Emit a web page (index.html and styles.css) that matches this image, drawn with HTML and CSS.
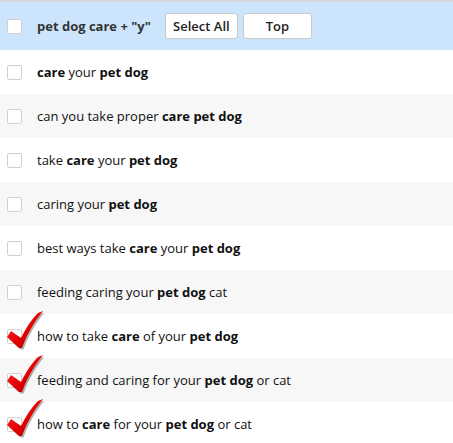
FILE: index.html
```html
<!DOCTYPE html>
<html>
<head>
<meta charset="utf-8">
<link rel="stylesheet" href="styles.css">
</head>
<body>
<div class="list">
  <div class="header">
    <span class="box"></span>
    <span class="title">pet dog care + "y"</span>
    <button class="btn btn-all">Select All</button>
    <button class="btn btn-top">Top</button>
  </div>
  <div class="row"><span class="box"></span><span class="label"><b>care</b> your <b>pet dog</b></span></div>
  <div class="row alt"><span class="box"></span><span class="label">can you take proper <b>care pet dog</b></span></div>
  <div class="row"><span class="box"></span><span class="label">take <b>care</b> your <b>pet dog</b></span></div>
  <div class="row alt"><span class="box"></span><span class="label">caring your <b>pet dog</b></span></div>
  <div class="row"><span class="box"></span><span class="label">best ways take <b>care</b> your <b>pet dog</b></span></div>
  <div class="row alt"><span class="box"></span><span class="label">feeding caring your <b>pet dog</b> cat</span></div>
  <div class="row"><span class="box checked"><svg class="tick" viewBox="0 0 42 42" width="42" height="42"><defs><linearGradient id="g1" x1="0" y1="0" x2="1" y2="1"><stop offset="0" stop-color="#ff4040"/><stop offset="0.55" stop-color="#e30000"/><stop offset="1" stop-color="#900000"/></linearGradient></defs><path d="M4 27 L8 21 L18 28 C24 16 29 9 35 3 L40 1 C31 12 24 24 19 38 L16 38 Z" fill="#000" opacity="0.3" transform="translate(1.5,1.5)"/><path d="M4 27 L8 21 L18 28 C24 16 29 9 35 3 L40 1 C31 12 24 24 19 38 L16 38 Z" fill="url(#g1)"/></svg></span><span class="label">how to take <b>care</b> of your <b>pet dog</b></span></div>
  <div class="row alt"><span class="box checked"><svg class="tick" viewBox="0 0 42 42" width="42" height="42"><defs><linearGradient id="g2" x1="0" y1="0" x2="1" y2="1"><stop offset="0" stop-color="#ff4040"/><stop offset="0.55" stop-color="#e30000"/><stop offset="1" stop-color="#900000"/></linearGradient></defs><path d="M4 27 L8 21 L18 28 C24 16 29 9 35 3 L40 1 C31 12 24 24 19 38 L16 38 Z" fill="#000" opacity="0.3" transform="translate(1.5,1.5)"/><path d="M4 27 L8 21 L18 28 C24 16 29 9 35 3 L40 1 C31 12 24 24 19 38 L16 38 Z" fill="url(#g2)"/></svg></span><span class="label">feeding and caring for your <b>pet dog</b> or cat</span></div>
  <div class="row"><span class="box checked"><svg class="tick" viewBox="0 0 42 42" width="42" height="42"><defs><linearGradient id="g3" x1="0" y1="0" x2="1" y2="1"><stop offset="0" stop-color="#ff4040"/><stop offset="0.55" stop-color="#e30000"/><stop offset="1" stop-color="#900000"/></linearGradient></defs><path d="M4 27 L8 21 L18 28 C24 16 29 9 35 3 L40 1 C31 12 24 24 19 38 L16 38 Z" fill="#000" opacity="0.3" transform="translate(1.5,1.5)"/><path d="M4 27 L8 21 L18 28 C24 16 29 9 35 3 L40 1 C31 12 24 24 19 38 L16 38 Z" fill="url(#g3)"/></svg></span><span class="label">how to <b>care</b> for your <b>pet dog</b> or cat</span></div>
</div>
</body>
</html>
```
FILE: styles.css
```css
html, body {
  margin: 0;
  padding: 0;
  background: #fff;
}
body {
  font-family: "Open Sans", "Noto Sans", sans-serif;
  font-size: 13px;
  color: #111;
}
.list {
  width: 453px;
}
.header {
  height: 48px;
  border-top: 2px solid #d8d8d8;
  background: #cce5fc;
  display: flex;
  align-items: center;
  padding-left: 7px;
}
.title {
  font-weight: bold;
  color: #333;
  margin-left: 15px;
  margin-right: 14px;
}
.btn {
  font-family: "Open Sans", "Noto Sans", sans-serif;
  font-size: 13px;
  font-weight: 600;
  color: #222;
  background: #fff;
  border: 1px solid #c8c8c8;
  border-radius: 3px;
  height: 26px;
  padding: 0;
  margin-right: 5px;
}
.btn-all { width: 73px; }
.btn-top { width: 69px; }
.row {
  height: 44px;
  display: flex;
  align-items: center;
  padding-left: 7px;
  background: #fff;
}
.row.alt {
  background: #f7f7f7;
}
.box {
  width: 13px;
  height: 13px;
  border: 1px solid #d0d0d0;
  border-radius: 2px;
  background: #fff;
  flex: none;
  position: relative;
}
.label {
  margin-left: 15px;
}
.label b {
  font-weight: bold;
}
.tick {
  position: absolute;
  left: -5px;
  top: -20px;
}
```
